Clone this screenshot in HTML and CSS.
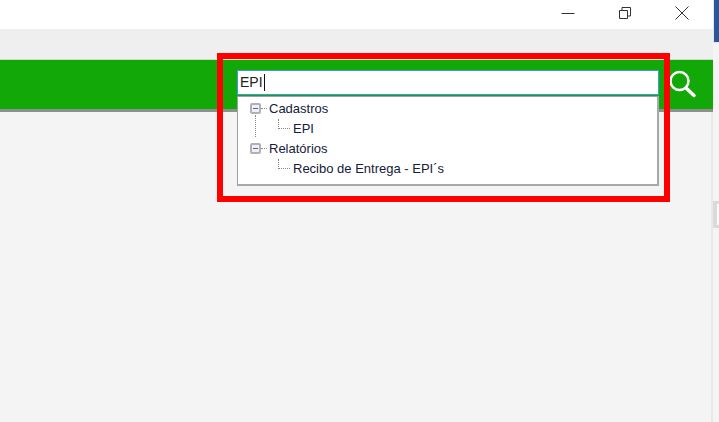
FILE: index.html
```html
<!DOCTYPE html>
<html lang="pt">
<head>
    <meta charset="UTF-8">
    <title>Busca de menus</title>
    <link rel="stylesheet" href="styles.css">
</head>
<body>
    <div class="window">
        <div class="titlebar">
            <button class="win-btn" type="button">
                <svg width="14" height="14" viewBox="0 0 14 14"><path d="M0.500 7.500h13" stroke="#333" fill="none"/></svg>
            </button>
            <button class="win-btn" type="button">
                <svg width="14" height="14" viewBox="0 0 14 14"><path d="M1.500 4.500h8v8h-8zM4 4.500V1.500h8.500v8.500h-3" stroke="#333" fill="none"/></svg>
            </button>
            <button class="win-btn" type="button">
                <svg width="16" height="16" viewBox="0 0 16 16"><path d="M1.500 1.500l13 13M14.500 1.500l-13 13" stroke="#333" fill="none"/></svg>
            </button>
        </div>
        <div class="toolbar"></div>
        <div class="greenbar">
            <div class="search-input">EPI<span class="caret"></span></div>
            <svg class="search-icon" width="30" height="30" viewBox="0 0 30 30">
                <circle cx="12.500" cy="12" r="9" stroke="#fff" stroke-width="2.500" fill="none"/>
                <path d="M19 19l8 7.500" stroke="#fff" stroke-width="3.500" stroke-linecap="round" fill="none"/>
            </svg>
        </div>
        <div class="content"></div>
    </div>
    <div class="side-strip"></div>
    <div class="scroll-thumb"></div>

    <!-- resultado da busca -->
    <div class="results">
        <div class="tree-row">
            <span class="expander"></span><span class="dots"></span>
            <span class="label">Cadastros</span>
        </div>
        <div class="tree-row child">
            <span class="elbow"></span>
            <span class="label">EPI</span>
        </div>
        <div class="tree-row">
            <span class="expander"></span><span class="dots"></span>
            <span class="label">Relatórios</span>
        </div>
        <div class="tree-row child">
            <span class="elbow"></span>
            <span class="label">Recibo de Entrega - EPI´s</span>
        </div>
        <span class="trunk"></span>
    </div>

    <div class="highlight"></div>
</body>
</html>
```

FILE: styles.css
```css
html, body {
    margin: 0;
    padding: 0;
    height: 100%;
    overflow: hidden;
    background-color: #f4f4f4;
    font-family: 'Liberation Sans', Arial, sans-serif;
}
.window {
    width: 713px;
    height: 422px;
    display: flex;
    flex-direction: column;
}
.titlebar {
    height: 29px;
    width: 719px;
    background-color: #ffffff;
    display: flex;
    justify-content: flex-end;
    align-items: flex-start;
    padding-right: 9px;
    box-sizing: border-box;
}
.win-btn {
    width: 57px;
    height: 26px;
    background: none;
    border: none;
    padding: 0;
    display: flex;
    align-items: center;
    justify-content: center;
}
.toolbar {
    height: 30px;
    background-color: #efeff0;
}
.greenbar {
    height: 49px;
    background-color: #11a808;
    border-top: 1px solid #cfd8cf;
    border-bottom: 3px solid #8f8f8f;
    display: flex;
    align-items: flex-start;
    padding-left: 237px;
}
.search-input {
    width: 422px;
    height: 25px;
    margin-top: 10px;
    padding: 0 2px;
    box-sizing: border-box;
    background-color: #ffffff;
    border: 1px solid #3f9ae0;
    font-size: 14px;
    line-height: 23px;
    color: #222;
    display: flex;
    align-items: center;
}
.caret {
    width: 1px;
    height: 17px;
    margin-left: 1px;
    background-color: #111;
}
.search-icon {
    margin-left: 8px;
    margin-top: 9px;
}
.content {
    flex: 1;
    background-color: #f4f4f4;
    border-right: 2px solid #e8e8e8;
}
.side-strip {
    position: absolute;
    top: 0;
    right: 0;
    width: 5px;
    height: 42px;
    background-color: #2b579a;
    border-left: 1px solid #dfe6f0;
    border-bottom: 1px solid #dfe6f0;
}
.scroll-thumb {
    position: absolute;
    top: 201px;
    right: 0;
    width: 2px;
    height: 21px;
    background-color: #fafafa;
    border: 3px solid #dadada;
    border-left-width: 4px;
    border-right: none;
}
.results {
    position: absolute;
    left: 237px;
    top: 96px;
    width: 422px;
    height: 90px;
    box-sizing: border-box;
    background-color: #ffffff;
    border: 1px solid #a0a0a0;
    border-bottom: 2px solid #a8a8ac;
    border-right: 2px solid #a8a8ac;
    padding-top: 1px;
    font-size: 13px;
    color: #14203a;
}
.tree-row {
    height: 20px;
    display: flex;
    align-items: center;
    padding-left: 12px;
}
.tree-row.child {
    padding-left: 40px;
}
.expander {
    width: 7px;
    height: 7px;
    border: 2px solid #b0b0b6;
    border-radius: 2px;
    background: linear-gradient(#4a68c0, #4a68c0) center / 5px 1px no-repeat #f0f0f0;
}
.dots {
    width: 6px;
    border-top: 1px dotted #888;
    margin-right: 2px;
}
.elbow {
    width: 12px;
    height: 10px;
    margin-top: -8px;
    margin-right: 3px;
    border-left: 1px dotted #888;
    border-bottom: 1px dotted #888;
    box-sizing: border-box;
}
.trunk {
    position: absolute;
    left: 17px;
    top: 18px;
    height: 22px;
    border-left: 1px dotted #888;
}
.highlight {
    position: absolute;
    left: 217px;
    top: 53px;
    width: 453px;
    height: 149px;
    box-sizing: border-box;
    border: 6px solid #ff0000;
}
```
